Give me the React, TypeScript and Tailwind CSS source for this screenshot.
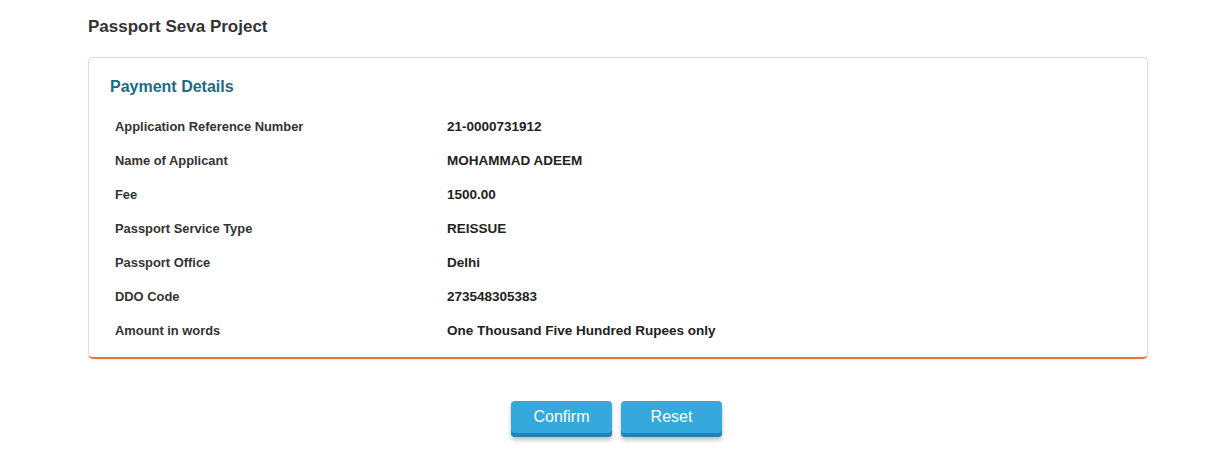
import React from "react";

const rows: [string, string][] = [
  ["Application Reference Number", "21-0000731912"],
  ["Name of Applicant", "MOHAMMAD ADEEM"],
  ["Fee", "1500.00"],
  ["Passport Service Type", "REISSUE"],
  ["Passport Office", "Delhi"],
  ["DDO Code", "273548305383"],
  ["Amount in words", "One Thousand Five Hundred Rupees only"],
];

export default function App() {
  return (
    <div className="w-[1230px] h-[458px] bg-white font-['Liberation_Sans',Arial,sans-serif] text-[#333]">
      <div className="pl-[88px] pr-[82px] pt-[16px]">
        <h1 className="text-[17px] font-bold text-[#333] leading-[22px]">Passport Seva Project</h1>

        <div className="mt-[19px] border border-[#dcdcdc] border-b-2 border-b-[#e8763a] rounded-[5px] pt-[19px] pb-[9px] px-[21px] shadow-[0_1px_2px_rgba(0,0,0,0.08)]">
          <h2 className="text-[16px] font-bold text-[#1b6b86] leading-[20px]">Payment Details</h2>
          <div className="mt-[13px] pl-[5px]">
            {rows.map(([label, value]) => (
              <div key={label} className="flex h-[34px] items-center font-bold">
                <div className="w-[332px] text-[12.9px] text-[#333]">{label}</div>
                <div className="text-[13.5px] text-[#222]">{value}</div>
              </div>
            ))}
          </div>
        </div>
      </div>

      <div className="flex justify-center gap-[9px] mt-[42px] pl-[3px]">
        <button className="w-[101px] h-[36px] pb-[4px] rounded-[4px] bg-[#36a9dc] text-white text-[16px] shadow-[inset_0_-4px_0_#2683ad,0_3px_4px_rgba(0,0,0,0.25)]">
          Confirm
        </button>
        <button className="w-[101px] h-[36px] pb-[4px] rounded-[4px] bg-[#36a9dc] text-white text-[16px] shadow-[inset_0_-4px_0_#2683ad,0_3px_4px_rgba(0,0,0,0.25)]">
          Reset
        </button>
      </div>
    </div>
  );
}
